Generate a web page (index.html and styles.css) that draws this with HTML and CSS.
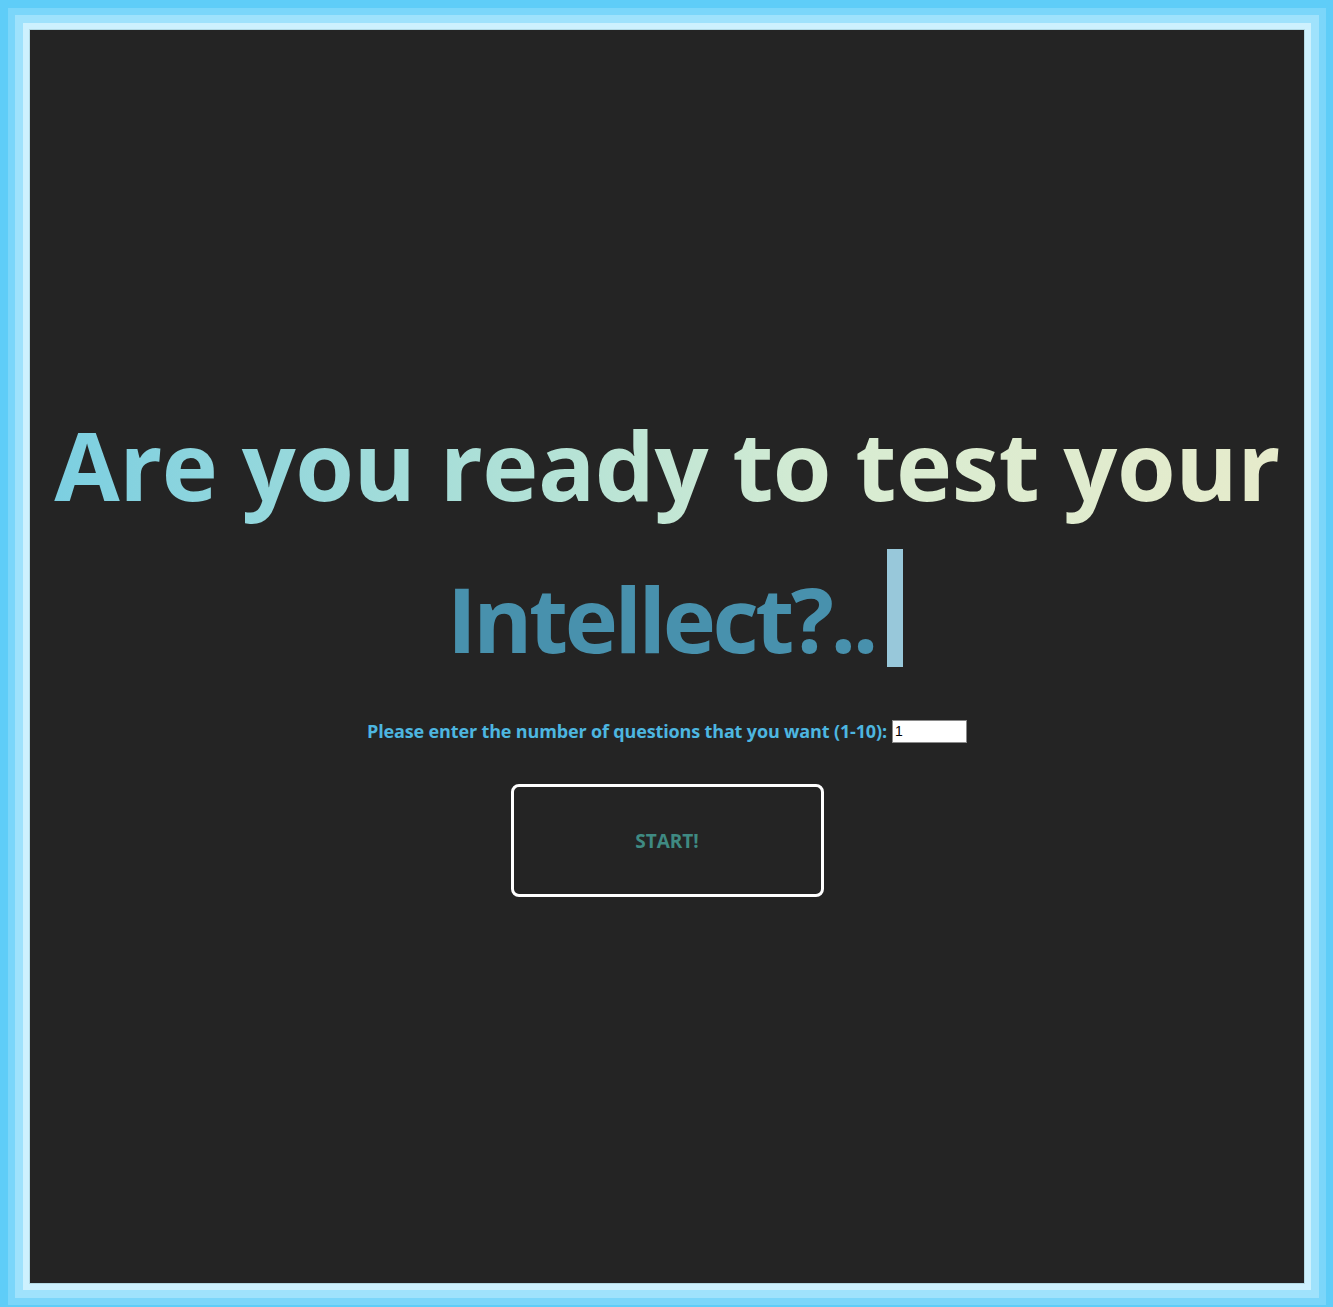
FILE: index.html
```html
<!DOCTYPE html>
<html lang="en">
<head>
<meta charset="utf-8">
<title>Quiz</title>
<link rel="stylesheet" href="styles.css">
</head>
<body>
<main class="stage">
  <h1 class="title">
    <span class="line line-one">Are you ready to test your</span>
    <span class="line line-two"><span class="typed">Intellect?..</span><span class="cursor"></span></span>
  </h1>
  <form class="setup">
    <label class="prompt" for="count">Please enter the number of questions that you want (1-10):</label>
    <input class="count" id="count" type="text" value="1">
  </form>
  <button class="start" type="button">START!</button>
</main>
</body>
</html>
```

FILE: styles.css
```css
html, body {
  margin: 0;
  padding: 0;
}

body {
  background: #2a2a2a;
  padding-top: 1px;
  height: 1306px;
  overflow: hidden;
}

.stage {
  box-sizing: border-box;
  margin: 29px 29px 0 30px;
  height: 1253px;
  background: #242424;
  box-shadow:
    0 0 0 1px #b3d9e4,
    0 0 0 7px #cdf1fe,
    0 0 0 15px #9fe2fc,
    0 0 0 22px #7bd6fa,
    0 0 0 30px #5fcdf8;
  display: flex;
  flex-direction: column;
  align-items: center;
  padding-top: 357px;
  font-family: "Open Sans", "Noto Sans", sans-serif;
}

.title {
  margin: 0;
  font-size: 95px;
  font-weight: 700;
  line-height: 154px;
  text-align: center;
  display: flex;
  flex-direction: column;
  align-items: center;
}

.line {
  display: block;
  white-space: nowrap;
}

.line-one {
  background: linear-gradient(90deg, #7ccfe1 0%, #b3e2d6 40%, #d8ecd2 65%, #e6ebcb 100%);
  -webkit-background-clip: text;
  background-clip: text;
  color: transparent;
  letter-spacing: -0.5px;
}

.line-two {
  display: flex;
  align-items: flex-end;
  color: #4891ad;
  font-size: 90px;
  letter-spacing: -3.4px;
  margin-left: 16px;
}

.cursor {
  display: block;
  width: 16px;
  height: 118px;
  background: #98c8da;
  margin-left: 12px;
  margin-bottom: 28px;
}

.setup {
  display: flex;
  align-items: center;
  margin-top: 24px;
}

.prompt {
  font-size: 18px;
  font-weight: 700;
  color: #4db6e0;
  letter-spacing: -0.15px;
}

.count {
  box-sizing: border-box;
  width: 75px;
  height: 23px;
  margin-left: 5px;
  padding: 1px 2px;
  border: 1px solid #8a8a8a;
  background: #ffffff;
  color: #000000;
  font-family: "Liberation Sans", Arial, sans-serif;
  font-size: 14px;
}

.start {
  box-sizing: border-box;
  width: 313px;
  height: 113px;
  margin-top: 41px;
  background: transparent;
  border: 3px solid #ffffff;
  border-radius: 8px;
  color: #3f8a82;
  font-family: "Open Sans", "Noto Sans", sans-serif;
  font-size: 19px;
  font-weight: 700;
  cursor: pointer;
}
```
